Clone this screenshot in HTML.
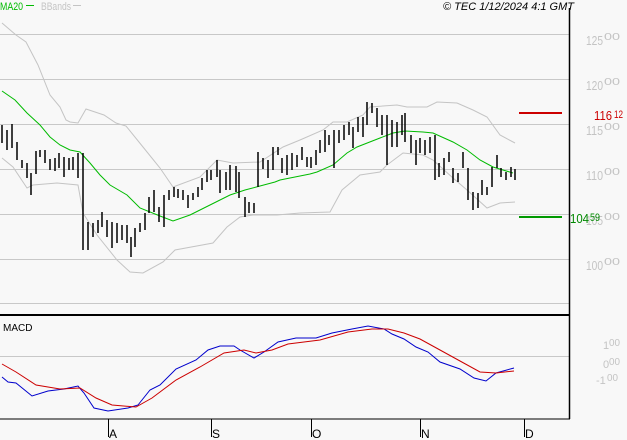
<!DOCTYPE html>
<html><head><meta charset="utf-8"><style>
html,body{margin:0;padding:0;background:#f8f8f8;}
svg{display:block;font-family:"Liberation Sans",sans-serif;}
</style></head><body>
<svg width="627" height="440" viewBox="0 0 627 440" xmlns="http://www.w3.org/2000/svg">
<rect width="627" height="440" fill="#f8f8f8"/>
<g stroke="#c8c8c8" stroke-width="1">
<line x1="0" y1="34.5" x2="569" y2="34.5"/><line x1="0" y1="79.5" x2="569" y2="79.5"/>
<line x1="0" y1="124.5" x2="569" y2="124.5"/><line x1="0" y1="169.5" x2="569" y2="169.5"/>
<line x1="0" y1="214.5" x2="569" y2="214.5"/><line x1="0" y1="259.5" x2="569" y2="259.5"/>
<line x1="0" y1="303.5" x2="569" y2="303.5"/><line x1="0" y1="356.5" x2="569" y2="356.5"/>
</g>
<g fill="#c4c4c4" font-size="13">
<text x="586" y="45" textLength="17" lengthAdjust="spacingAndGlyphs">125</text><text x="604" y="40" font-size="10" textLength="16" lengthAdjust="spacingAndGlyphs">00</text>
<text x="586" y="90" textLength="17" lengthAdjust="spacingAndGlyphs">120</text><text x="604" y="85" font-size="10" textLength="16" lengthAdjust="spacingAndGlyphs">00</text>
<text x="586" y="135" textLength="17" lengthAdjust="spacingAndGlyphs">115</text><text x="604" y="130" font-size="10" textLength="16" lengthAdjust="spacingAndGlyphs">00</text>
<text x="586" y="180" textLength="17" lengthAdjust="spacingAndGlyphs">110</text><text x="604" y="175" font-size="10" textLength="16" lengthAdjust="spacingAndGlyphs">00</text>
<text x="586" y="225" textLength="17" lengthAdjust="spacingAndGlyphs">105</text><text x="604" y="220" font-size="10" textLength="16" lengthAdjust="spacingAndGlyphs">00</text>
<text x="586" y="270" textLength="17" lengthAdjust="spacingAndGlyphs">100</text><text x="604" y="265" font-size="10" textLength="16" lengthAdjust="spacingAndGlyphs">00</text>
<text x="603" y="349" font-size="11">1</text><text x="609" y="346" font-size="10" textLength="11" lengthAdjust="spacingAndGlyphs">00</text>
<text x="603" y="368" font-size="11">0</text><text x="609" y="365" font-size="10" textLength="11" lengthAdjust="spacingAndGlyphs">00</text>
<text x="596" y="384" font-size="11">-1</text><text x="607" y="381" font-size="10" textLength="11" lengthAdjust="spacingAndGlyphs">00</text>
</g>
<g fill="none" stroke="#c4c4c4" stroke-width="1">
<polyline points="2,23 16,35 26,42 38,65 50,95 60,107 66,120 70,122 78,123 86,109 104,115 116,123 126,126 143,147 160,168 173,187 200,177 217,160 233,163 260,162 283,147 300,140 323,130 333,122 347,122 363,115 370,107 397,105 407,107 427,107 437,102 457,103 473,110 487,117 500,135 515,143"/>
<polyline points="2,158 13,167 27,188 33,185 57,183 78,185 83,213 97,235 117,260 130,272 143,273 163,262 175,250 213,243 227,227 240,217 253,215 277,215 300,213 330,212 342,190 360,175 380,172 387,165 403,153 423,155 433,160 453,178 467,190 487,208 500,203 515,202"/>
</g>
<polyline fill="none" stroke="#00bb00" stroke-width="1" points="2,91 15,100 27,113 40,125 50,137 60,145 70,150 80,152 90,163 100,175 110,185 127,195 140,208 160,216 173,221 190,215 210,205 230,195 245,190 260,186 275,182 280,180 310,174 317,172 333,165 347,153 357,147 380,138 393,133 405,131 423,132 433,133 453,142 467,150 480,160 493,167 513,173"/>
<path fill="none" stroke="#000" stroke-width="1.5" d="M2,125V143M7,130V150M12,124V148M17,142V160M22,160V168M27,163V178M31,173V195M36,151V174M40,150V157M45,150V163M50,159V170M55,158V171M59,153V168M64,157V177M69,158V170M73,157V170M78,153V178M83,153V250M88,222V250M93,223V237M98,220V233M102,212V227M107,220V237M112,222V248M117,223V243M122,225V240M127,225V243M131,237V257M135,228V247M140,223V232M145,213V230M149,197V213M154,190V212M159,207V222M164,195V227M169,190V200M174,187V197M178,189V198M183,190V200M188,195V208M193,193V200M198,187V197M202,178V190M207,170V182M211,170V180M217,160V177M220,170V193M226,172V190M230,165V190M236,166V192M239,172V198M245,197V217M249,202V213M254,203V213M258,152V187M263,158V169M268,160V178M273,147V170M278,147V155M282,158V173M287,155V175M292,153V170M297,155V167M302,147V160M307,157V167M311,157V168M316,150V165M320,140V153M325,130V152M329,135V145M334,130V168M339,130V143M344,125V140M349,122V135M353,127V148M358,117V132M363,117V137M367,102V125M372,103V113M377,108V127M382,115V135M387,115V165M392,120V147M397,122V147M402,115V135M405,113V142M411,135V153M416,140V165M420,138V153M425,140V155M430,137V153M435,135V180M439,163V177M444,158V175M449,152V162M453,168V183M458,173V182M463,152V168M468,168V200M473,192V210M478,193V208M482,180V195M487,187V195M492,167V187M497,155V168M501,168V177M506,172V180M511,167V177M515,169V180"/>
<line x1="519" y1="113" x2="562" y2="113" stroke="#cc0000" stroke-width="2"/>
<line x1="519" y1="217" x2="562" y2="217" stroke="#009900" stroke-width="2"/>
<text x="594" y="120" fill="#cc0000" font-size="13" textLength="18" lengthAdjust="spacingAndGlyphs">116</text>
<text x="614" y="118" fill="#cc0000" font-size="11" textLength="9" lengthAdjust="spacingAndGlyphs">12</text>
<text x="570" y="223" fill="#008800" font-size="13" textLength="19" lengthAdjust="spacingAndGlyphs">104</text>
<text x="590" y="221" fill="#008800" font-size="11" textLength="10" lengthAdjust="spacingAndGlyphs">59</text>
<line x1="569.5" y1="8" x2="569.5" y2="419" stroke="#000" stroke-width="1.5"/>
<line x1="0" y1="315" x2="570" y2="315" stroke="#000" stroke-width="2"/>
<line x1="0" y1="419" x2="570" y2="419" stroke="#000" stroke-width="1"/>
<text x="3" y="331" font-size="10" fill="#000">MACD</text>
<polyline fill="none" stroke="#0000cc" stroke-width="1" points="2,377 8,382 16,383 32,396 48,391 64,389 78,386 84,393 94,408 108,411 128,408 138,405 150,390 160,385 176,369 196,360 208,350 220,346 234,346 240,350 254,358 264,352 278,342 296,338 316,338 332,333 352,329 368,326 384,329 392,334 404,339 416,347 428,352 440,362 460,369 474,378 486,381 496,373 514,368"/>
<polyline fill="none" stroke="#cc0000" stroke-width="1" points="2,364 16,372 36,385 60,389 80,388 96,398 112,405 136,407 152,398 176,380 200,367 224,353 244,350 256,353 272,350 288,344 320,340 348,332 372,329 388,329 404,333 420,339 440,350 460,361 480,372 496,373 514,371"/>
<g stroke="#000" stroke-width="1">
<line x1="108.5" y1="419" x2="108.5" y2="437"/><line x1="211.5" y1="419" x2="211.5" y2="437"/>
<line x1="311.5" y1="419" x2="311.5" y2="437"/><line x1="420.5" y1="419" x2="420.5" y2="437"/>
<line x1="524.5" y1="419" x2="524.5" y2="437"/>
</g>
<g font-size="12" fill="#000">
<text x="109" y="438">A</text><text x="212" y="438">S</text><text x="312" y="438">O</text><text x="421" y="438">N</text><text x="525" y="438">D</text>
</g>
<text x="0" y="10" font-size="11" fill="#00bb00" textLength="23" lengthAdjust="spacingAndGlyphs">MA20</text>
<line x1="26" y1="5.5" x2="34" y2="5.5" stroke="#00bb00"/>
<text x="41" y="10" font-size="11" fill="#c4c4c4" textLength="30" lengthAdjust="spacingAndGlyphs">BBands</text>
<line x1="73" y1="5.5" x2="81" y2="5.5" stroke="#c4c4c4"/>
<text x="574" y="10" font-size="11" font-style="italic" fill="#000" text-anchor="end">© TEC 1/12/2024 4:1 GMT</text>
</svg>
</body></html>
